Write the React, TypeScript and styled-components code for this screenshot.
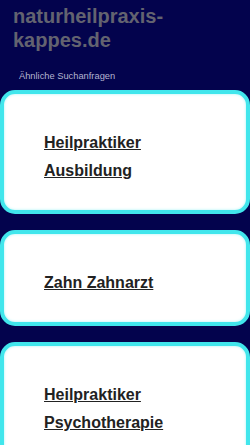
import styled, { createGlobalStyle } from 'styled-components';

const GlobalStyle = createGlobalStyle`
  html, body {
    margin: 0;
    padding: 0;
    background-color: #03034d;
  }
  body {
    font-family: "Liberation Sans", Arial, sans-serif;
  }
`

const Page = styled.div`
  display: flex;
  flex-direction: column;
  min-height: 445px;
  background-color: #03034d;
`

const Header = styled.header`
  display: flex;
  flex-direction: column;
  padding: 4px 0 0 13px;
`

const Title = styled.h1`
  margin: 0;
  font-size: 20px;
  line-height: 24px;
  font-weight: bold;
  color: #636370;
`

const Subtitle = styled.p`
  margin: 18px 0 8px 6px;
  font-size: 9.3px;
  line-height: 12px;
  color: #b4b4d0;
`

const List = styled.div`
  display: flex;
  flex-direction: column;
  gap: 16px;
`

const Card = styled.a`
  display: flex;
  flex-direction: column;
  justify-content: center;
  padding: 35px 40px 25px;
  background-color: #ffffff;
  border: 4px solid #41e6ec;
  border-radius: 15px;
  box-shadow: inset 0 0 3px #a8f4f6;
  text-decoration: none;
`

const CardText = styled.span`
  font-size: 16px;
  line-height: 28px;
  font-weight: bold;
  color: #222222;
  text-decoration: underline;
`

const items = [
  ['Heilpraktiker', 'Ausbildung'],
  ['Zahn Zahnarzt'],
  ['Heilpraktiker', 'Psychotherapie'],
]

export default function App() {
  return (
    <>
      <GlobalStyle />
      <Page>
        <Header>
          <Title>naturheilpraxis-<br />kappes.de</Title>
          <Subtitle>Ähnliche Suchanfragen</Subtitle>
        </Header>
        <List>
          {items.map((lines, i) => (
            <Card key={i} href="#">
              {lines.map((l) => (
                <CardText key={l}>{l}</CardText>
              ))}
            </Card>
          ))}
        </List>
      </Page>
    </>
  )
}
